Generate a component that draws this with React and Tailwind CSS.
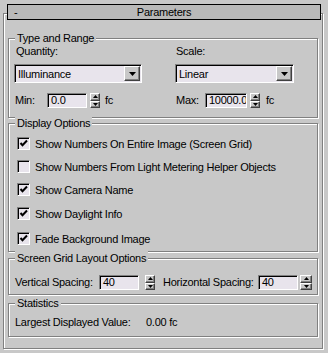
const sunken =
  'border border-t-[#808080] border-l-[#808080] border-r-white border-b-white shadow-[inset_1px_1px_0_#000]'
const raised =
  'border border-t-white border-l-white border-r-[#404040] border-b-[#404040] bg-[#c8c8c8] shadow-[inset_-1px_-1px_0_#808080]'

function Group({ label, className, children }) {
  return (
    <div
      className={`relative ml-[4px] w-[310px] border border-[#808080] shadow-[1px_1px_0_#fff,inset_1px_1px_0_#fff] ${className}`}
    >
      <span className="absolute left-[6px] top-[-8px] bg-[#c8c8c8] px-[2px] leading-[14px]">
        {label}
      </span>
      {children}
    </div>
  )
}

function Dropdown({ value, width }) {
  return (
    <div className={`flex h-[19px] items-center bg-[#e8e4ec] ${sunken} ${width}`}>
      <span className="flex-1 pl-[3px] leading-[14px]">{value}</span>
      <span className={`mr-[1px] flex h-[15px] w-[16px] items-center justify-center ${raised}`}>
        <svg width="7" height="4" viewBox="0 0 7 4">
          <path d="M0 0h7L3.5 4z" fill="#000" />
        </svg>
      </span>
    </div>
  )
}

function Spinner({ className }) {
  return (
    <div className={`flex h-[15px] flex-col ${className}`}>
      <span className={`flex h-[8px] items-center justify-center ${raised}`}>
        <svg width="5" height="3" viewBox="0 0 5 3">
          <path d="M2.5 0L5 3H0z" fill="#000" />
        </svg>
      </span>
      <span className={`flex h-[7px] items-center justify-center ${raised}`}>
        <svg width="5" height="3" viewBox="0 0 5 3">
          <path d="M0 0h5L2.5 3z" fill="#000" />
        </svg>
      </span>
    </div>
  )
}

function Field({ value, width }) {
  return (
    <div className={`flex h-[15px] items-center overflow-hidden bg-[#e8e4ec] pl-[3px] leading-[13px] ${sunken} ${width}`}>
      {value}
    </div>
  )
}

function Check({ checked, label, className }) {
  return (
    <div className={`ml-[8px] flex h-[13px] items-center ${className}`}>
      <span className={`flex h-[13px] w-[13px] items-center justify-center bg-[#e8e4ec] ${sunken}`}>
        {checked && (
          <svg width="9" height="9" viewBox="0 0 9 9">
            <path d="M1.5 4l2 2.2L8 1.5" stroke="#000" strokeWidth="2" fill="none" />
          </svg>
        )}
      </span>
      <span className="ml-[5px] leading-[14px]">{label}</span>
    </div>
  )
}

export default function App() {
  return (
    <div className="h-[353px] w-[328px] overflow-hidden whitespace-nowrap bg-[#c8c8c8] pt-[13px] font-['Liberation_Sans',Arial,sans-serif] text-[11px] tracking-[-0.25px] text-black">
      <div className="ml-[3px] h-[336px] w-[320px] border border-[#808080] shadow-[1px_1px_0_#fff,inset_1px_1px_0_#fff]">
        <div className="relative ml-[3px] mt-[-10px] flex h-[16px] w-[314px] items-center justify-center border border-black bg-[#b9b9b9] leading-[14px]">
          <span className="absolute left-[6px] top-[0px]">-</span>
          <span>Parameters</span>
        </div>

        <Group label="Type and Range" className="mt-[18px] h-[80px]">
          <div className="flex">
            <div className="ml-[5px] w-[128px]">
              <div className="ml-[2px] mt-[5px] leading-[14px]">Quantity:</div>
              <Dropdown value="Illuminance" width="mt-[6px] w-[128px]" />
            </div>
            <div className="ml-[33px] w-[119px]">
              <div className="ml-[1px] mt-[5px] leading-[14px]">Scale:</div>
              <Dropdown value="Linear" width="mt-[6px] w-[119px]" />
            </div>
          </div>
          <div className="ml-[6px] mt-[9px] flex items-center">
            <div className="flex w-[161px] items-center">
              <span className="w-[32px]">Min:</span>
              <Field value="0.0" width="w-[40px]" />
              <Spinner className="ml-[3px] w-[10px]" />
              <span className="ml-[5px]">fc</span>
            </div>
            <span className="w-[29px]">Max:</span>
            <Field value="10000.0" width="w-[42px]" />
            <Spinner className="ml-[3px] w-[10px]" />
            <span className="ml-[6px]">fc</span>
          </div>
        </Group>

        <Group label="Display Options" className="mt-[5px] h-[129px]">
          <Check checked label="Show Numbers On Entire Image (Screen Grid)" className="mt-[13px]" />
          <Check label="Show Numbers From Light Metering Helper Objects" className="mt-[10px]" />
          <Check checked label="Show Camera Name" className="mt-[10px]" />
          <Check checked label="Show Daylight Info" className="mt-[11px]" />
          <Check checked label="Fade Background Image" className="mt-[12px]" />
        </Group>

        <Group label="Screen Grid Layout Options" className="mt-[6px] h-[37px]">
          <div className="ml-[6px] mt-[15px] flex items-center">
            <span className="w-[84px]">Vertical Spacing:</span>
            <Field value="40" width="w-[40px]" />
            <Spinner className="ml-[6px] w-[10px]" />
            <span className="ml-[8px] w-[95px]">Horizontal Spacing:</span>
            <Field value="40" width="w-[40px]" />
            <Spinner className="ml-[2px] w-[12px]" />
          </div>
        </Group>

        <Group label="Statistics" className="mt-[8px] h-[34px]">
          <div className="ml-[6px] mt-[11px] flex leading-[14px]">
            <span className="w-[131px]">Largest Displayed Value:</span>
            <span>0.00 fc</span>
          </div>
        </Group>
      </div>
    </div>
  )
}
